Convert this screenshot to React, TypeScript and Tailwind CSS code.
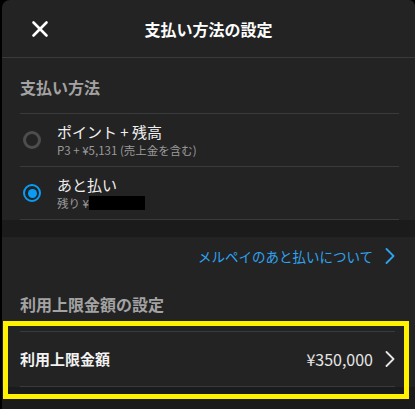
import { X } from 'lucide-react'

function Chevron({ className }: { className: string }) {
  return (
    <svg viewBox="0 0 10 16" className={className} fill="none" stroke="currentColor" strokeWidth={1.8} strokeLinecap="round" strokeLinejoin="round">
      <polyline points="1.5,1 8.5,8 1.5,15" />
    </svg>
  )
}

function Radio({ checked }: { checked: boolean }) {
  if (checked) {
    return (
      <span className="flex h-[18px] w-[18px] items-center justify-center rounded-full border-[2.5px] border-[#0a9cf5]">
        <span className="h-[9px] w-[9px] rounded-full bg-[#0a9cf5]" />
      </span>
    )
  }
  return <span className="block h-[18px] w-[18px] rounded-full border-[3px] border-[#4d4d4d]" />
}

export default function App() {
  return (
    <div className="relative h-[409px] w-[415px] overflow-hidden bg-black pl-[2px] font-['Noto_Sans_CJK_JP',sans-serif]">
      <div className="flex h-full flex-col rounded-tl-[8px] rounded-tr-[6px] bg-[#232323]">
        {/* Header */}
        <div className="grid h-[58px] shrink-0 grid-cols-[1fr_auto_1fr] items-center border-b border-[#3a3a3a]">
          <div className="pl-[25px]">
            <X className="h-[26px] w-[26px] text-white" strokeWidth={2.4} />
          </div>
          <div className="text-[16px] font-bold text-white">支払い方法の設定</div>
          <div />
        </div>

        {/* Payment method */}
        <div className="pt-[17px]">
          <div className="ml-[18px] h-[24px] text-[16px] font-bold leading-[24px] text-[#a3a3a3]">支払い方法</div>
          <div className="ml-[18px] mr-[16px] mt-[14px] border-t border-[#3a3a3a]">
            <div className="flex h-[53px] items-center border-b border-[#3a3a3a]">
              <div className="ml-[3px] w-[34px]">
                <Radio checked={false} />
              </div>
              <div className="flex flex-col">
                <span className="text-[15px] leading-[20px] text-[#efefef]">ポイント + 残高</span>
                <span className="text-[11.5px] leading-[16px] text-[#9a9a9a]">P3 + ¥5,131 (売上金を含む)</span>
              </div>
            </div>
            <div className="flex h-[53px] items-center border-b border-[#3a3a3a]">
              <div className="ml-[3px] w-[34px]">
                <Radio checked={true} />
              </div>
              <div className="flex flex-col">
                <span className="text-[15px] leading-[20px] text-[#efefef]">あと払い</span>
                <span className="flex items-center text-[11.5px] leading-[16px] text-[#9a9a9a]">
                  残り ¥<span className="inline-block h-[14px] w-[56px] bg-black" />
                </span>
              </div>
            </div>
          </div>
        </div>

        <div className="h-[17px] shrink-0 bg-[#1b1b1b]" />

        {/* Limit */}
        <div className="flex h-[38px] items-center justify-end pr-[20px]">
          <span className="text-[13.5px] text-[#2ea3f2]">メルペイのあと払いについて</span>
          <Chevron className="ml-[12px] h-[16px] w-[10px] text-[#2ea3f2]" />
        </div>
        <div className="ml-[18px] mt-[17px] h-[24px] text-[16px] font-bold leading-[24px] text-[#a3a3a3]">利用上限金額の設定</div>
        <div className="ml-[18px] mr-[20px] mt-[15px] flex h-[56px] items-center border-y border-[#3a3a3a]">
          <span className="text-[15px] font-bold text-[#f2f2f2]">利用上限金額</span>
          <span className="ml-auto text-[16px] text-[#e6e6e6]">¥350,000</span>
          <Chevron className="ml-[12px] h-[16px] w-[10px] text-[#e6e6e6]" />
        </div>
        <div className="flex-1 bg-[#1b1b1b]" />
      </div>

      {/* highlight */}
      <div className="absolute left-[3px] top-[321px] h-[78px] w-[406px] border-[5px] border-[#fff200]" />
    </div>
  )
}
